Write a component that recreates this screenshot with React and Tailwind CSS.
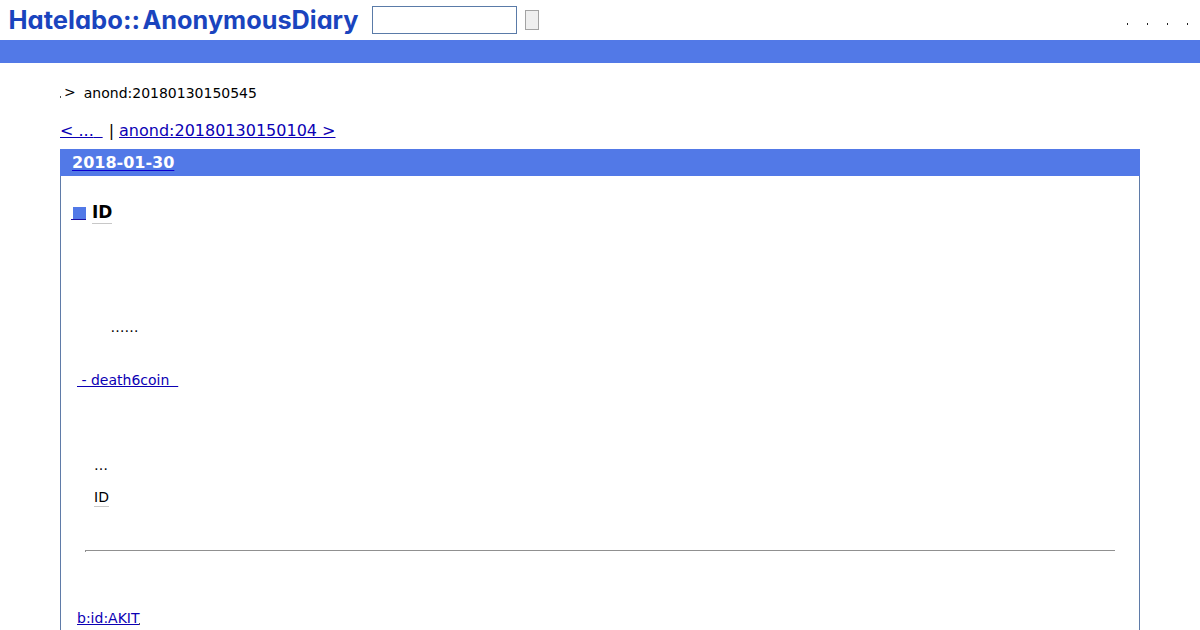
import React from 'react';

const MENU_ITEMS = [1, 2, 3, 4];

const Logo = () => (
    <svg width="352" height="36" viewBox="0 0 352 36" role="img" aria-label="Hatelabo::AnonymousDiary">
        <g
            fill="#1a44be"
            fontFamily="Inter, sans-serif"
            fontWeight="650"
            fontSize="25"
            className="[font-feature-settings:'cv11','ss03']"
        >
            <text x="0.5" y="26" textLength="131.5" lengthAdjust="spacingAndGlyphs">Hatelabo::</text>
            <text x="134.5" y="26" textLength="216" lengthAdjust="spacingAndGlyphs">AnonymousDiary</text>
        </g>
    </svg>
);

const Header = () => (
    <header>
        <div className="flex h-10 items-start pl-2">
            <div className="mt-[3px]">
                <Logo />
            </div>
            <form className="flex items-start" onSubmit={(e) => e.preventDefault()}>
                <input
                    type="text"
                    aria-label="search"
                    className="ml-3 mt-1.5 h-7 w-[145px] border border-[#5a7ba8] bg-white px-1 outline-none"
                />
                <button
                    type="submit"
                    aria-label="submit"
                    className="ml-2 mt-2.5 h-5 w-3.5 border border-[#a3a3a3] bg-[#efefef]"
                />
            </form>
            <ul className="ml-auto mr-3 mt-[23px] flex gap-[19px]">
                {MENU_ITEMS.map((item) => (
                    <li key={item} className="h-[2px] w-px bg-[#222222]" />
                ))}
            </ul>
        </div>
        <div className="h-[23px] bg-[#5279e7]" />
    </header>
);

const Link = ({ children, className }) => (
    <a href="#" className={`whitespace-pre text-[#0b00b4] underline ${className || ''}`}>
        {children}
    </a>
);

const Keyword = ({ children, className }) => (
    <span className={`inline-block border-b border-[#c8c8c8] ${className || ''}`}>{children}</span>
);

const Entry = () => (
    <section className="h-[490px] border border-b-0 border-[#5f7ba8]">
        <h2 className="-mx-px -mt-px h-[27px] bg-[#5279e7] pl-3 text-base leading-[27px] font-bold text-white">
            <a href="#" className="underline decoration-[#0b00d0] decoration-1 underline-offset-2">2018-01-30</a>
        </h2>

        <h3 className="ml-2.5 mt-[25px] flex h-[22px] items-start font-bold">
            <a href="#" aria-label="permalink" className="mt-[6px] flex w-[15px] flex-col items-end border-b border-[#1c10a0]">
                <span className="block h-3 w-[13px] bg-[#5279e7]" />
            </a>
            <Keyword className="ml-1.5 h-[23px] text-[17px] leading-[22px]">ID</Keyword>
        </h3>

        <div className="ml-4 text-sm leading-5">
            <p className="ml-[33.5px] mt-[94px]">……</p>
            <p className="mt-[33px]">
                <Link>{' - death6coin  '}</Link>
            </p>
            <p className="ml-[17px] mt-[65px]">…</p>
            <p className="ml-[17px] mt-[12px] flex">
                <Keyword className="h-5">ID</Keyword>
            </p>
        </div>

        <div className="mx-6 mt-[43px] h-[2px] border-l border-t border-[#909090]" />

        <p className="ml-4 mt-[56px] flex text-sm leading-5">
            <Link>b:id:AKIT</Link>
            <span className="-ml-px mt-[15px] h-[2px] w-px bg-[#555555]" />
        </p>
    </section>
);

export default function App() {
    return (
        <div className="h-[630px] overflow-hidden bg-white font-['DejaVu_Sans',sans-serif] text-black">
            <Header />
            <main className="mx-[60px]">
                <div className="mt-5 flex h-5 text-sm leading-5">
                    <span className="mt-[13px] h-[2px] w-px bg-[#555555]" />
                    <span className="-mt-px ml-[3px]">&gt;</span>
                    <span className="ml-2">anond:20180130150545</span>
                </div>
                <nav className="mb-2 mt-[18px] flex h-5 text-base leading-5">
                    <Link>
                        {'< ...'}
                        <span className="text-sm leading-5">{'  '}</span>
                    </Link>
                    <span className="ml-1.5 mr-[5px]">|</span>
                    <Link>{'anond:20180130150104 >'}</Link>
                </nav>
                <Entry />
            </main>
        </div>
    );
}
